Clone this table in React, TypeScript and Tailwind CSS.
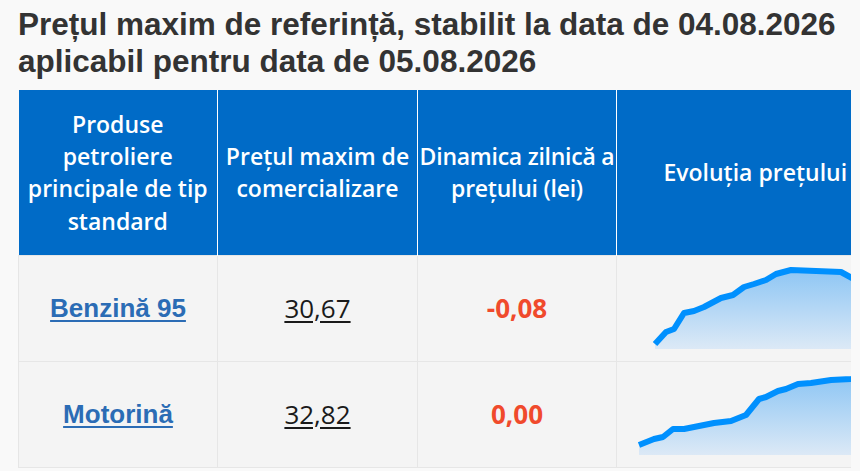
import React from "react";

type Row = {
  name: string;
  price: string;
  diff: string;
  line: [number, number][];
};

const rows: Row[] = [
  {
    name: "Benzină 95",
    price: "30,67",
    diff: "-0,08",
    line: [
      [38, 88], [49, 76], [57, 73], [67, 57], [77, 55], [87, 51], [104, 42], [116, 39],
      [127, 31], [137, 28], [149, 24], [159, 18], [174, 14], [224, 16], [235, 22], [250, 32],
    ],
  },
  {
    name: "Motorină",
    price: "32,82",
    diff: "0,00",
    line: [
      [22, 83], [37, 77], [46, 75], [56, 67], [67, 67], [97, 61], [114, 59], [129, 53],
      [142, 37], [149, 35], [161, 29], [169, 27], [181, 22], [194, 21], [214, 18], [234, 17], [260, 15],
    ],
  },
];

function Spark({ points, id }: { points: [number, number][]; id: string }) {
  const line = points.map((p) => p.join(",")).join(" ");
  const first = points[0];
  const last = points[points.length - 1];
  const area = `${first[0]},93 ${line} ${last[0]},93`;
  return (
    <svg width="275" height="105" viewBox="0 0 275 105" className="block">
      <defs>
        <linearGradient id={id} x1="0" y1="0" x2="0" y2="1">
          <stop offset="0" stopColor="#8ec6f4" />
          <stop offset="1" stopColor="#dce9f6" />
        </linearGradient>
      </defs>
      <polygon points={area} fill={`url(#${id})`} />
      <polyline
        points={line}
        fill="none"
        stroke="#0090fe"
        strokeWidth="6"
        strokeLinejoin="round"
        strokeLinecap="butt"
      />
    </svg>
  );
}

export default function App() {
  return (
    <div className="min-h-screen bg-[#f9f9f9] pt-[6px] pl-[18px]">
      <h1 className="font-['Liberation_Sans',Arial,sans-serif] text-[31.5px] leading-[37px] font-bold whitespace-nowrap text-[#333333]">
        Prețul maxim de referință, stabilit la data de 04.08.2026
        <br />
        aplicabil pentru data de 05.08.2026
      </h1>

      <div className="mt-[10px] w-[833px] overflow-hidden">
        <table className="w-[875px] table-fixed border-collapse font-['Open_Sans',sans-serif]">
          <colgroup>
            <col className="w-[199px]" />
            <col className="w-[200px]" />
            <col className="w-[199px]" />
            <col className="w-[277px]" />
          </colgroup>
          <thead>
            <tr className="bg-[#006bc7] text-white">
              <th className="h-[165px] border-r border-white px-[2px] text-[23px] leading-[32.3px] font-semibold">
                Produse petroliere principale de tip standard
              </th>
              <th className="border-r border-white px-0 text-[23px] leading-[32.3px] font-semibold">
                Prețul maxim de comercializare
              </th>
              <th className="border-r border-white px-0 text-[23px] leading-[32.3px] font-semibold tracking-[-0.25px]">
                Dinamica zilnică a prețului (lei)
              </th>
              <th className="px-0 text-[23px] leading-[32.3px] font-semibold">Evoluția prețului</th>
            </tr>
          </thead>
          <tbody>
            {rows.map((r, i) => (
              <tr key={r.name} className="bg-[#f4f4f4]">
                <td className="h-[106px] border border-[#e6e6e6] p-0 text-center">
                  <a
                    href="#"
                    className="font-['Liberation_Sans',Arial,sans-serif] text-[26px] font-bold text-[#2b6cb5] underline underline-offset-[3px]"
                  >
                    {r.name}
                  </a>
                </td>
                <td className="border border-[#e6e6e6] p-0 text-center text-[26px] text-[#1a1a1a] underline underline-offset-[3px]">
                  {r.price}
                </td>
                <td className="border border-[#e6e6e6] p-0 text-center text-[26px] font-bold text-[#f04a2c]">
                  {r.diff}
                </td>
                <td className="border border-[#e6e6e6] p-0 align-top">
                  <Spark points={r.line} id={`g${i}`} />
                </td>
              </tr>
            ))}
          </tbody>
        </table>
      </div>
    </div>
  );
}
